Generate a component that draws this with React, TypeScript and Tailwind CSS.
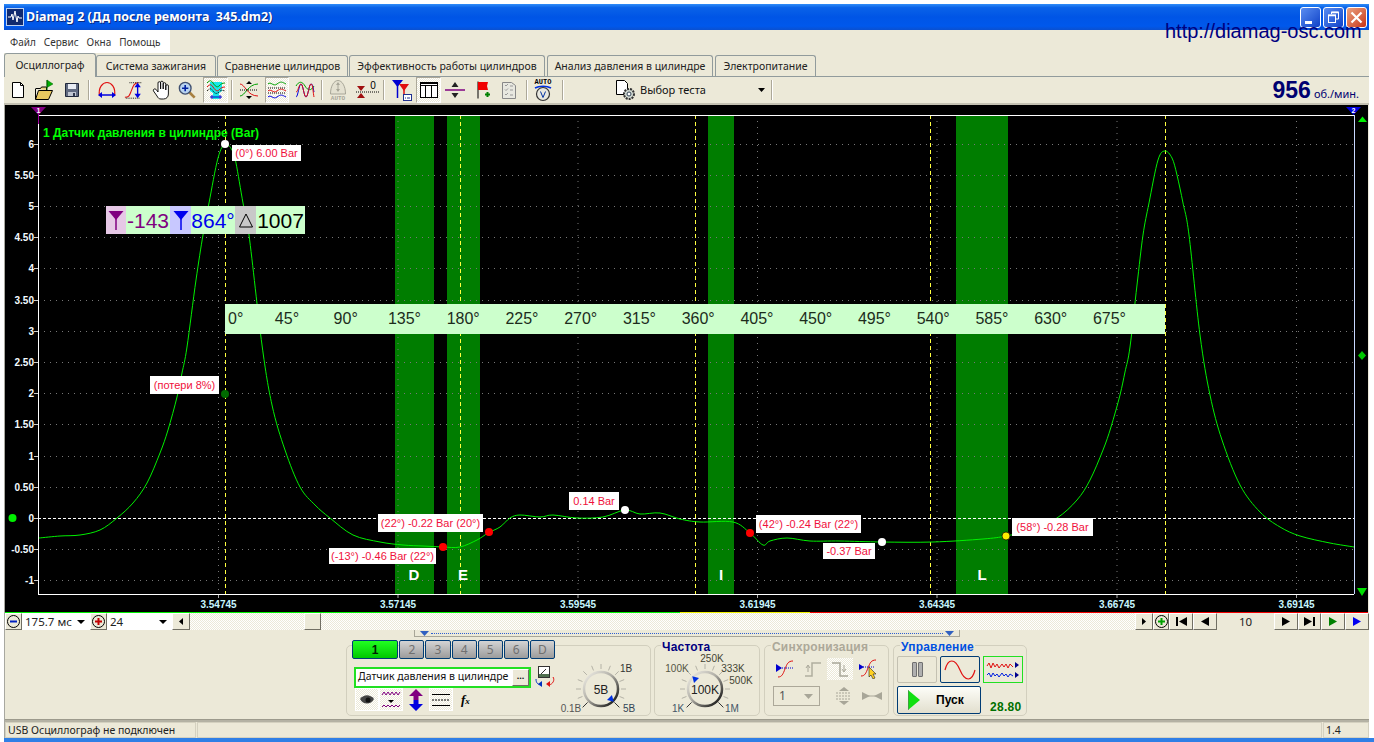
import React from "react";

const smooth = (p: number[][]) => {
  let d = `M${p[0][0]} ${p[0][1]}`;
  for (let i = 0; i < p.length - 1; i++) {
    const a = p[Math.max(i - 1, 0)], b = p[i], c = p[i + 1], e = p[Math.min(i + 2, p.length - 1)];
    d += ` C${(b[0] + (c[0] - a[0]) / 6).toFixed(1)} ${(b[1] + (c[1] - a[1]) / 6).toFixed(1)} ${(c[0] - (e[0] - b[0]) / 6).toFixed(1)} ${(c[1] - (e[1] - b[1]) / 6).toFixed(1)} ${c[0]} ${c[1]}`;
  }
  return d;
};

const curve = [
  [39, 538],[60, 536],[80, 535],[100, 530],[117, 518],[133, 503],[147, 483],[160, 453],[168, 430],[177, 397],[182, 373],[187, 347],
  [196, 280],[203, 235],[209, 203],[218, 158],[225, 144],[232, 150],[236, 163],[243, 203],[249, 235],[262, 345],[272, 405],[285, 450],[300, 487],[315, 505],[330, 518],
  [353, 535],[380, 542],[403, 545],[423, 546],[443, 547],[460, 547],[477, 540],[488, 533],[500, 527],[510, 518],[520, 515],[540, 517],[553, 515],[577, 518],[603, 517],[625, 510],[640, 514],[660, 513],
  [680, 519],[700, 522],[733, 522],[750, 533],[763, 545],[770, 541],[787, 538],[810, 541],[840, 541],[882, 542],[933, 542],[983, 539],[1006, 536],[1030, 530],[1057, 518],[1077, 500],[1090, 480],[1103, 450],[1111, 427],[1120, 395],[1125, 372],[1130, 347],
  [1137, 285],[1143, 235],[1149, 203],[1158, 160],[1165, 151],[1172, 158],[1177, 175],[1183, 203],[1189, 235],[1200, 335],[1210, 395],[1222, 440],[1240, 485],[1260, 512],[1280, 527],[1300, 536],[1330, 543],[1354, 547],
];

const yLabels = ["6", "5.50", "5", "4.50", "4", "3.50", "3", "2.50", "2", "1.50", "1", "0.50", "0", "-0.50", "-1"];
const vGrid = [218.5, 398, 578, 757.5, 937, 1117, 1296.5];
const xLabels = ["3.54745", "3.57145", "3.59545", "3.61945", "3.64345", "3.66745", "3.69145"];
const yellow = [225.5, 460.5, 695.5, 930.5, 1165.5];
const dots: [number, number, string][] = [[225, 144, "#fff"], [443, 547, "#f00"], [489, 532, "#f00"], [625, 510, "#fff"], [750, 533, "#f00"], [882, 542, "#fff"], [1006, 536, "#ffeb00"], [225, 394, "#006a00"]];

function Chart() {
  return (
    <svg className="block h-[507px] w-[1363px]" viewBox="5 105 1363 507" fontFamily="'Liberation Sans', sans-serif">
      <rect x="5" y="105" width="1363" height="507" fill="#000" />
      {[[395, 39], [447, 33], [708, 26], [956, 52]].map(([x, w]) => <rect key={x} x={x} y="115" width={w} height="479" fill="#007d00" />)}
      {yLabels.map((t, i) => {
        const y = 143.5 + i * 31.2;
        const r = Math.round(y) + 0.5;
        return (
          <g key={t}>
            {t !== "0" && <line x1="38" x2="1354" y1={r} y2={r} stroke="#777" strokeDasharray="1 5" />}
            <line x1="34" x2="38" y1={r} y2={r} stroke="#ccc" />
            <text x="34" y={r + 3.5} textAnchor="end" fontSize="10" fontWeight="700" fill="#f4fbff">{t}</text>
          </g>
        );
      })}
      {vGrid.map((x, i) => (
        <g key={x}>
          <line x1={x} x2={x} y1="115" y2="594" stroke="#777" strokeDasharray="1 5" />
          <line x1={x} x2={x} y1="594" y2="598" stroke="#aaa" />
          <text x={x} y="608" textAnchor="middle" fontSize="10" fontWeight="700" fill="#c8f6ff">{xLabels[i]}</text>
        </g>
      ))}
      {yellow.map((x) => <line key={x} x1={x} x2={x} y1="115" y2="594" stroke="#ffff40" strokeDasharray="4 3" />)}
      <line x1="38" x2="1354" y1="518.5" y2="518.5" stroke="#fff" strokeDasharray="3 2" />
      <path d={smooth(curve)} fill="none" stroke="#00f000" strokeWidth="1" />
      <line x1="38" x2="1354" y1="115.5" y2="115.5" stroke="#fff" />
      <line x1="38" x2="1354" y1="594.5" y2="594.5" stroke="#fff" />
      <line x1="38.5" x2="38.5" y1="115" y2="594" stroke="#fff" />
      <line x1="1354.5" x2="1354.5" y1="115" y2="594" stroke="#c8d8ff" />
      <path d="M31 107h15l-7.5 8z" fill="#800080" />
      <line x1="38.5" x2="38.5" y1="113" y2="124" stroke="#a000a0" />
      <text x="38.5" y="113" textAnchor="middle" fontSize="7" fontWeight="700" fill="#fff">1</text>
      <path d="M1346 107h15l-7.5 8z" fill="#0000e0" />
      <text x="1353.5" y="113" textAnchor="middle" fontSize="7" fontWeight="700" fill="#fff">2</text>
      <path d="M1358 122h9l-4.500 -5.500z" fill="#00f000" />
      <path d="M1362 351l4 4.500 -4 4.500 -4 -4.500z" fill="#00c800" />
      <path d="M1357 588h10l-5 8z" fill="#00e000" />
      <circle cx="12.500" cy="518" r="4" fill="#00f000" />
      {dots.map(([x, y, c]) => <circle key={x + "-" + y} cx={x} cy={y} r="4" fill={c} stroke={c === "#ffeb00" ? "#000" : "none"} strokeWidth="0.700" />)}
      {[["D", 414], ["E", 463], ["I", 721], ["L", 982]].map(([t, x]) => (
        <text key={t as string} x={x as number} y="580" textAnchor="middle" fontSize="15" fontWeight="700" fill="#fff">{t}</text>
      ))}
      <text x="43" y="137" fontSize="12" fontWeight="700" fill="#00ff00">1 Датчик давления в цилиндре (Bar)</text>
    </svg>
  );
}

const Label = ({ className, children }: { className: string; children: React.ReactNode }) => (
  <div className={`absolute flex items-center justify-center whitespace-nowrap bg-white text-[11px] leading-none text-[#f0103c] ${className}`}>{children}</div>
);

const Funnel = ({ color }: { color: string }) => (
  <svg width="16" height="22" viewBox="0 0 16 22"><path d="M0.500 2h15L8 11z" fill={color} /><path d="M8 9v12" stroke={color} strokeWidth="1.500" /></svg>
);

const rulerLabels = ["45°", "90°", "135°", "180°", "225°", "270°", "315°", "360°", "405°", "450°", "495°", "540°", "585°", "630°", "675°"];

function Scope() {
  return (
    <div className="relative h-[507px] w-[1363px] overflow-hidden font-['Liberation_Sans',sans-serif]">
      <Chart />
      <Label className="left-[227px] top-[40px] h-[16px] w-[69px]">(0°) 6.00 Bar</Label>
      <Label className="left-[145px] top-[271px] h-[18px] w-[69px]">(потери 8%)</Label>
      <Label className="left-[373px] top-[409px] h-[18px] w-[105px]">(22°) -0.22 Bar (20°)</Label>
      <Label className="left-[324px] top-[443px] h-[16px] w-[107px]">(-13°) -0.46 Bar (22°)</Label>
      <Label className="left-[564px] top-[387px] h-[18px] w-[50px]">0.14 Bar</Label>
      <Label className="left-[751px] top-[410px] h-[18px] w-[105px]">(42°) -0.24 Bar (22°)</Label>
      <Label className="left-[818px] top-[438px] h-[16px] w-[52px]">-0.37 Bar</Label>
      <Label className="left-[1007px] top-[413px] h-[18px] w-[81px]">(58°) -0.28 Bar</Label>

      <div className="absolute left-[101px] top-[101px] flex h-[28px] items-center text-[21px] leading-none">
        <div className="flex h-full w-[20px] items-center justify-center bg-[#e6c8e6]"><Funnel color="#800080" /></div>
        <div className="flex h-full w-[44px] items-center justify-center bg-[#ccffcc] text-[#800080]">-143</div>
        <div className="flex h-full w-[21px] items-center justify-center bg-[#c8c8ff]"><Funnel color="#0000ee" /></div>
        <div className="flex h-full w-[44px] items-center justify-center bg-[#ccffcc] text-[#0000ee]">864°</div>
        <div className="flex h-full w-[21px] items-center justify-center bg-[#c8c8c8]">
          <svg width="16" height="16" viewBox="0 0 16 16"><path d="M8 2L1.500 15h13z" fill="none" stroke="#000" /></svg>
        </div>
        <div className="flex h-full w-[49px] items-center justify-center bg-[#ccffcc] text-black">1007</div>
      </div>

      <div className="absolute left-[220px] top-[199px] flex h-[30px] w-[940px] items-center bg-[#ccffcc] text-[16px] leading-none text-[#1c2c1c]">
        <div className="w-[32.600px] shrink-0 pl-[3px]">0°</div>
        {rulerLabels.map((t) => <div key={t} className="w-[58.750px] shrink-0 text-center">{t}</div>)}
      </div>
    </div>
  );
}

/* ---------- toolbar icons ---------- */
const I = ({ w = 22, h = 22, children }: { w?: number; h?: number; children: React.ReactNode }) => (
  <svg width={w} height={h} viewBox={`0 0 ${w} ${h}`} fill="none">{children}</svg>
);
const IconNew = () => <I w={14} h={18}><path d="M1.500 1.500h8l3 3v12h-11z" fill="#fff" stroke="#000" /><path d="M9.500 1.500v3h3" stroke="#000" /></I>;
const IconOpen = () => (
  <I w={20} h={22}>
    <path d="M1.500 9.500h5l1 -1.500h5v3" fill="#e8d080" stroke="#000" />
    <path d="M1.500 20.500l3 -9h14l-4 9z" fill="#e8c860" stroke="#000" />
    <path d="M1.500 10v10" stroke="#000" />
    <path d="M13 1l6 4 -6 3.500z" fill="#00b000" stroke="#006000" strokeWidth=".5" /><path d="M13 1v10" stroke="#006000" />
  </I>
);
const IconSave = () => (
  <I w={16} h={16}>
    <path d="M1.500 1.500h13v13h-13z" fill="#606a80" stroke="#20283c" />
    <rect x="4" y="2" width="8" height="5" fill="#e8ecf4" />
    <rect x="4" y="10" width="8" height="4" fill="#c0c6d2" />
    <rect x="9" y="11" width="2" height="3" fill="#30384c" />
  </I>
);
const IconArch = () => (
  <I w={20} h={20}>
    <path d="M2.500 16C1 7 6 2.500 10 2.500S19 7 17.500 16" stroke="#e01010" strokeWidth="1.200" />
    <path d="M4 15h12" stroke="#0000e0" strokeWidth="1.500" />
    <path d="M1 15l4 -3v6zM19 15l-4 -3v6z" fill="#0000e0" />
  </I>
);
const IconRise = () => (
  <I w={22} h={22}>
    <path d="M1 19c5 0 5 -2 7 -7s3 -9 8 -9" stroke="#e01010" strokeWidth="1.200" />
    <path d="M6 3h13M2 20h16" stroke="#000" strokeDasharray="1 1" />
    <path d="M15 6v11" stroke="#0000e0" strokeWidth="1.500" />
    <path d="M15 3l-3.500 5h7zM15 20l-3.500 -5h7z" fill="#0000e0" />
  </I>
);
const IconHand = () => (
  <I w={18} h={20}>
    <path d="M6 12V3a1.300 1.300 0 0 1 2.600 0v6V2.500a1.300 1.300 0 0 1 2.600 0V9V4a1.300 1.300 0 0 1 2.600 0v6V6a1.300 1.300 0 0 1 2.600 0v8c0 3 -2 5 -5 5H9c-2 0 -3 -1 -4 -3L1.500 11c-1 -2 2 -3 3 -1z" fill="#fff" stroke="#000" strokeWidth=".9" />
  </I>
);
const IconZoom = () => (
  <I w={20} h={20}>
    <path d="M12 12l6.500 6.500" stroke="#a88040" strokeWidth="3" />
    <circle cx="8" cy="8" r="6.500" fill="#b8d4f0" stroke="#405070" strokeWidth="1.500" />
    <path d="M8 4.500v7M4.500 8h7" stroke="#0020a0" strokeWidth="1.800" />
  </I>
);
const IconCyan = () => (
  <I w={20} h={22}>
    <path d="M4 3h12v9l-3 2v6H7v-6l-3 -2z" fill="#19e6e6" />
    <path d="M1 4c3 -3 4 -3 6 0s4 5 6 3 3 -3 6 -3" stroke="#00a000" />
    <path d="M1 8c3 -3 4 -3 6 0s4 5 6 3 3 -3 6 -3" stroke="#e01010" />
    <path d="M1 12c3 -3 4 -3 6 0s4 3 6 1 3 -2 6 -1" stroke="#000" strokeDasharray="1 1" />
    <path d="M4 18h12M6 16v4M14 16v4" stroke="#0000d0" />
  </I>
);
const IconCross = () => (
  <I w={20} h={20}>
    <path d="M1 4c5 0 7 12 18 12" stroke="#e01010" /><path d="M1 16C6 16 9 4 19 4" stroke="#00a000" />
    <path d="M1 10h18" stroke="#000" strokeDasharray="1 1" />
    <path d="M10 1l-3 3h6zM10 19l-3 -3h6z" fill="#000" />
  </I>
);
const IconWaves = () => (
  <I w={20} h={20}>
    <path d="M1 4c3 -3 5 3 9 0s5 -2 9 0" stroke="#00a000" />
    <path d="M1 8h18M1 13h18" stroke="#000" strokeDasharray="1 1" />
    <path d="M1 11c3 -3 5 3 9 0s5 -2 9 0" stroke="#e01010" />
    <path d="M1 17c3 -3 5 3 9 0s5 -2 9 0" stroke="#0000e0" />
  </I>
);
const IconOverlap = () => (
  <I w={20} h={20}>
    <path d="M1 6c3 -5 6 -5 9 0s6 5 9 0" stroke="#00a000" />
    <path d="M1 17c2 0 3 -13 5 -13s3 13 5 13 3 -13 5 -13 2 4 3 8" stroke="#0000e0" />
    <path d="M1 12c2 0 3 -8 5 -8s3 13 5 13 3 -13 5 -13 2 9 3 13" stroke="#e01010" />
  </I>
);
const IconAutoArch = () => (
  <I w={18} h={22}>
    <path d="M1.500 15C1.500 7 5 1.500 9 1.500s7.500 5.500 7.500 13.500z" fill="#e4e1d1" stroke="#a8a698" />
    <path d="M9 4v8" stroke="#a8a698" /><path d="M9 3l-2 3h4zM9 13l-2 -3h4z" fill="#a8a698" />
    <text x="9" y="21" textAnchor="middle" fontSize="6" fontWeight="700" fill="#a8a698" fontFamily="'Liberation Mono', monospace">AUTO</text>
  </I>
);
const IconZero = () => (
  <I w={26} h={20}>
    <path d="M1 12h24" stroke="#000" strokeDasharray="1 1" />
    <path d="M2 6h8l-4 5z" fill="#a01010" />
    <path d="M6 13l-4 5h8z" fill="#a01010" />
    <text x="18" y="9" textAnchor="middle" fontSize="10" fill="#000" fontFamily="'Liberation Sans', sans-serif">0</text>
  </I>
);
const IconFunnels = () => (
  <I w={20} h={22}>
    <path d="M0 1h11L5.500 8z" fill="#0000d0" /><path d="M5.500 6v13" stroke="#0000d0" strokeWidth="1.500" />
    <path d="M7 5h10l-5 7z" fill="#e01010" /><path d="M12 10v6" stroke="#e01010" strokeWidth="1.500" />
    <rect x="11.500" y="15.500" width="8" height="6" fill="#fff" stroke="#203090" />
    <path d="M13 19h1M15 19h3" stroke="#203090" />
  </I>
);
const IconGrid = () => (
  <I w={18} h={16}>
    <rect x=".5" y=".5" width="17" height="15" fill="#fff" stroke="#000" />
    <path d="M0 1.500h18M0 3.500h18M5.500 3v13M11.500 3v13" stroke="#000" />
  </I>
);
const IconDivider = () => (
  <I w={20} h={18}>
    <path d="M0 9h20" stroke="#800080" strokeWidth="1.500" />
    <path d="M10 1l-3.500 5h7zM10 17l-3.500 -5h7z" fill="#222" />
  </I>
);
const IconFlag = () => (
  <I w={14} h={20}>
    <path d="M2 1.500v17" stroke="#000" />
    <path d="M2 2h10l-1 4 1 4H2z" fill="#f00000" />
    <path d="M9 14.500h5M11.500 12v5" stroke="#008000" strokeWidth="2" />
  </I>
);
const IconChecklist = () => (
  <I w={14} h={18}>
    <path d="M.5 1.500h9l4 3v13H.5z" fill="#e8e8e0" stroke="#888" />
    <path d="M3 4l1 1 2 -2M3 8.500l1 1 2 -2M3 13l1 1 2 -2M8 5h3M8 9h3M8 14h3" stroke="#999" />
  </I>
);
const IconAutoV = () => (
  <I w={18} h={24}>
    <text x="9" y="6" textAnchor="middle" fontSize="7" fontWeight="700" fill="#000" fontFamily="'Liberation Mono', monospace">AUTO</text>
    <path d="M1 10c4 -2.500 12 -2.500 16 0" stroke="#0030e0" strokeWidth="1.500" />
    <circle cx="9" cy="16" r="6.500" fill="#e8e8e0" stroke="#333" strokeWidth="1.200" />
    <path d="M6.500 13.500l2.500 6 2.500 -6" stroke="#0030a0" />
  </I>
);
const IconTest = () => (
  <I w={22} h={22}>
    <path d="M1.500 1.500h8l3 3v11h-11z" fill="#fff" stroke="#000" />
    <circle cx="14" cy="15" r="5" fill="#d0d8d0" stroke="#333" strokeWidth="2" strokeDasharray="2 1" />
    <circle cx="14" cy="15" r="2" fill="#fff" stroke="#345" />
  </I>
);

const Slot = ({ className, children }: { className: string; children: React.ReactNode }) => (
  <div className={`flex h-[26px] shrink-0 items-center justify-center ${className}`}>{children}</div>
);
const Pressed = ({ className, children }: { className: string; children: React.ReactNode }) => (
  <div className={`flex h-[26px] shrink-0 items-center justify-center border border-t-[#aca899] border-l-[#aca899] border-r-white border-b-white bg-[repeating-conic-gradient(#fff_0_25%,#ece9d8_0_50%)] bg-size-[2px_2px] ${className}`}>{children}</div>
);
const Sep = ({ className = "" }: { className?: string }) => <div className={`my-[3px] h-[20px] w-[2px] shrink-0 border-l border-[#aca899] border-r-white bg-white ${className}`} />;

function Toolbar() {
  return (
    <div className="flex h-[28px] items-start border-b-2 border-[#c4c1b2]">
      <Slot className="w-[28px]"><IconNew /></Slot>
      <Slot className="w-[24px]"><IconOpen /></Slot>
      <Slot className="w-[32px]"><IconSave /></Slot>
      <Sep />
      <Slot className="w-[34px]"><IconArch /></Slot>
      <Slot className="w-[20px]"><IconRise /></Slot>
      <Slot className="w-[34px]"><IconHand /></Slot>
      <Slot className="w-[18px]"><IconZoom /></Slot>
      <Pressed className="ml-[7px] w-[25px]"><IconCyan /></Pressed>
      <Sep className="ml-[3px]" />
      <Slot className="w-[32px]"><IconCross /></Slot>
      <Pressed className="w-[24px]"><IconWaves /></Pressed>
      <Slot className="w-[32px]"><IconOverlap /></Slot>
      <Sep />
      <Slot className="w-[30px]"><IconAutoArch /></Slot>
      <Slot className="w-[30px]"><IconZero /></Slot>
      <Sep />
      <Slot className="ml-[3px] w-[28px]"><IconFunnels /></Slot>
      <Pressed className="w-[25px]"><IconGrid /></Pressed>
      <Slot className="w-[28px]"><IconDivider /></Slot>
      <Slot className="w-[28px]"><IconFlag /></Slot>
      <Slot className="w-[24px]"><IconChecklist /></Slot>
      <Sep className="ml-[5px]" />
      <Slot className="w-[30px]"><IconAutoV /></Slot>
      <Sep className="ml-[4px]" />
      <div className="flex h-[26px] w-[207px] shrink-0 items-center pl-[51px] text-[11px] text-[#111]">
        <IconTest />
        <span className="ml-[3px]">Выбор теста</span>
        <svg className="ml-[52px]" width="7" height="4" viewBox="0 0 7 4"><path d="M0 0h7L3.500 4z" fill="#000" /></svg>
      </div>
      <Sep />
      <div className="ml-auto flex h-[26px] items-center pr-[10px] text-[#000070]">
        <span className="font-['Liberation_Sans',sans-serif] text-[23px] font-bold leading-none">956</span>
        <span className="ml-[3px] mt-[6px] text-[11px] leading-none">об./мин.</span>
      </div>
    </div>
  );
}

/* ---------- scroll row ---------- */
const RoundBtn = ({ color, sign }: { color: string; sign: "-" | "+" }) => (
  <svg width="13" height="13" viewBox="0 0 13 13" fill="none">
    <circle cx="6.500" cy="6.500" r="6" stroke="#000" fill="#ece9d8" />
    <path d={sign === "-" ? "M3 6.500h7" : "M3 6.500h7M6.500 3v7"} stroke={color} strokeWidth="2" />
  </svg>
);
const Raised = ({ className, children }: { className: string; children?: React.ReactNode }) => (
  <div className={`flex h-[17px] shrink-0 items-center justify-center border border-t-white border-l-white border-r-[#716f64] border-b-[#716f64] bg-[#ece9d8] ${className}`}>{children}</div>
);
const Tri = ({ dir, color = "#000" }: { dir: "l" | "r"; color?: string }) => (
  <svg width="8" height="9" viewBox="0 0 8 9"><path d={dir === "l" ? "M8 0v9L0 4.500z" : "M0 0v9l8 -4.500z"} fill={color} /></svg>
);

function ScrollRow() {
  return (
    <div className="h-[18px]">
      <div className="flex h-[1px] w-[1363px]">
        <div className="w-[675px] bg-[#00f000]" />
        <div className="w-[130px] bg-[#f0f000]" />
        <div className="flex-1 bg-[#f00000]" />
      </div>
      <div className="flex h-[17px] items-stretch text-[11.500px] leading-none text-[#222]">
        <Raised className="w-[17px]"><RoundBtn color="#0020c0" sign="-" /></Raised>
        <div className="flex w-[68px] shrink-0 items-center bg-white pl-[3px]">175.7 мс<svg className="ml-auto mr-[5px]" width="8" height="4" viewBox="0 0 8 4"><path d="M0 0h8L4 4z" fill="#000" /></svg></div>
        <Raised className="w-[17px]"><RoundBtn color="#c00000" sign="+" /></Raised>
        <div className="flex w-[65px] shrink-0 items-center bg-white pl-[3px]">24<svg className="ml-auto mr-[5px]" width="8" height="4" viewBox="0 0 8 4"><path d="M0 0h8L4 4z" fill="#000" /></svg></div>
        <Raised className="w-[18px]"><svg width="4" height="7" viewBox="0 0 4 7"><path d="M4 0v7L0 3.500z" fill="#000" /></svg></Raised>
        <div className="flex flex-1 items-start bg-[repeating-conic-gradient(#ece9d8_0_25%,#fff_0_50%)] bg-size-[2px_2px] pl-[114px]">
          <Raised className="w-[17px]" />
        </div>
        <Raised className="w-[18px]"><svg width="4" height="7" viewBox="0 0 4 7"><path d="M0 0v7l4 -3.500z" fill="#000" /></svg></Raised>
        <Raised className="w-[16px]"><RoundBtn color="#00a000" sign="+" /></Raised>
        <Raised className="w-[24px]"><div className="mr-[1px] h-[9px] w-[2px] bg-black" /><Tri dir="l" /></Raised>
        <Raised className="w-[24px]"><Tri dir="l" /></Raised>
        <div className="flex w-[57px] shrink-0 items-center justify-center">10</div>
        <Raised className="w-[24px]"><Tri dir="r" /></Raised>
        <Raised className="w-[23px]"><Tri dir="r" /><div className="ml-[1px] h-[9px] w-[2px] bg-black" /></Raised>
        <Raised className="w-[24px]"><Tri dir="r" color="#008000" /></Raised>
        <Raised className="w-[24px] border-l-[#0060e0]"><Tri dir="r" color="#0000f0" /></Raised>
      </div>
    </div>
  );
}

/* ---------- knobs ---------- */
const Knob = ({ w, cx, cy, value, id, ptr, ticks, labels }: { w: number; cx: number; cy: number; value: string; id: string; ptr: number; ticks: number[]; labels: [string, number, number, string][] }) => (
  <svg width={w} height="68" viewBox={`0 0 ${w} 68`} fontFamily="'Liberation Sans', sans-serif">
    <defs>
      <linearGradient id={id} x1="0" y1="0" x2="1" y2="1">
        <stop offset="0" stopColor="#f4f2ea" /><stop offset=".45" stopColor="#b0aea6" /><stop offset="1" stopColor="#000" />
      </linearGradient>
    </defs>
    {ticks.map((a) => {
      const r = (a * Math.PI) / 180;
      return <line key={a} x1={cx + Math.cos(r) * 20} y1={cy + Math.sin(r) * 20} x2={cx + Math.cos(r) * 25} y2={cy + Math.sin(r) * 25} stroke="#b4b2a6" />;
    })}
    {[135, 45].map((a) => {
      const r = (a * Math.PI) / 180;
      return <line key={a} x1={cx + Math.cos(r) * 19} y1={cy + Math.sin(r) * 19} x2={cx + Math.cos(r) * 26} y2={cy + Math.sin(r) * 26} stroke="#333" />;
    })}
    <circle cx={cx} cy={cy} r="17" fill="#ece9d8" stroke={`url(#${id})`} strokeWidth="2.500" />
    <path d="M0 -3.500L6 0 0 3.500z" fill="#0030e0" transform={`translate(${cx + Math.cos((ptr * Math.PI) / 180) * 12} ${cy + Math.sin((ptr * Math.PI) / 180) * 12}) rotate(${ptr})`} />
    <text x={cx} y={cy + 4.500} textAnchor="middle" fontSize="12" fill="#222">{value}</text>
    {labels.map(([t, x, y, c]) => <text key={t} x={x} y={y} textAnchor="middle" fontSize="10" fill={c}>{t}</text>)}
  </svg>
);

const Panel = ({ className, title, titleClass, children }: { className: string; title?: string; titleClass?: string; children: React.ReactNode }) => (
  <div className={`relative h-[71px] shrink-0 rounded-[5px] border border-[#d2cfbe] ${className}`}>
    {title && <div className={`absolute -top-[6px] left-[6px] bg-[#ece9d8] px-[1px] font-['Liberation_Sans',sans-serif] text-[12px] font-bold leading-[14px] tracking-[0.2px] ${titleClass}`}>{title}</div>}
    {children}
  </div>
);

const Chan = ({ t, active }: { t: string; active?: boolean }) => (
  <div className={active
    ? "flex h-[19px] w-[48px] items-center justify-center rounded-[2px] border border-[#003c74] bg-linear-to-b from-[#20ff20] to-[#00c800] font-['Liberation_Sans',sans-serif] text-[12px] font-bold text-[#002000]"
    : "flex h-[19px] w-[26px] items-center justify-center rounded-[2px] border border-[#003c74] bg-linear-to-b from-[#d4d4d4] to-[#9c9c9c] text-[12px] text-[#707070]"}>{t}</div>
);

const SmallIconBox = ({ className, pressed, children }: { className: string; pressed?: boolean; children: React.ReactNode }) => (
  <div className={`flex h-[23px] shrink-0 items-center justify-center ${pressed ? "border border-white bg-[repeating-conic-gradient(#fff_0_25%,#ece9d8_0_50%)] bg-size-[2px_2px]" : ""} ${className}`}>{children}</div>
);

function Panel1() {
  return (
    <Panel className="ml-[2px] w-[305px]">
      <div className="flex">
        <div className="-mt-[6px] flex w-[208px] shrink-0 flex-col pl-[5px]">
          <div className="flex gap-[1px]">
            <Chan t="1" active />
            <Chan t="2" /><Chan t="3" /><Chan t="4" /><Chan t="5" /><Chan t="6" /><Chan t="D" />
          </div>
          <div className="ml-[2px] mt-[7px] flex items-center">
            <div className="flex h-[21px] w-[177px] shrink-0 items-center border-2 border-[#22e022] bg-white pl-[2px] text-[10.500px] text-[#111]">
              <span className="whitespace-nowrap">Датчик давления в цилиндре</span>
              <div className="ml-auto mr-[0px] flex h-[17px] w-[17px] shrink-0 items-center justify-center border border-t-white border-l-white border-r-[#716f64] border-b-[#716f64] bg-[#ece9d8] text-[9px] font-bold leading-none">···</div>
            </div>
            <svg className="ml-[4px]" width="20" height="22" viewBox="0 0 20 22" fill="none">
              <rect x="3.500" y=".5" width="11" height="11" fill="#fff" stroke="#333" />
              <rect x="4" y="8" width="10" height="3" fill="#507050" />
              <path d="M6 8l5 -5" stroke="#333" />
              <path d="M1 13c0 4 2 6 6 6" stroke="#0030c0" /><path d="M7 15v6l-4 -3z" fill="#0030c0" />
              <path d="M18 11c2 3 0 7 -4 8" stroke="#e01010" /><path d="M13 15v6l4 -3z" fill="#e01010" transform="rotate(180 14 18)" />
            </svg>
          </div>
          <div className="ml-[3px] flex items-center">
            <SmallIconBox pressed className="w-[24px]">
              <svg width="16" height="12" viewBox="0 0 16 12"><path d="M1 5c4 -5 10 -5 14 0 -3 6 -11 6 -14 0z" fill="#444" /><circle cx="9" cy="6" r="2.500" fill="#111" /></svg>
            </SmallIconBox>
            <SmallIconBox pressed className="w-[24px]">
              <svg width="20" height="20" viewBox="0 0 20 20" fill="none"><path d="M1 5l2 -3 2 3 2 -3 2 3 2 -3 2 3 2 -3 2 3 2 -3" stroke="#800080" /><path d="M1 17l2 -2 2 2 2 -2 2 2 2 -2 2 2 2 -2 2 2 2 -2" stroke="#800080" /><path d="M7 10h6l-3 3z" fill="#000" /></svg>
            </SmallIconBox>
            <div className="flex w-[26px] shrink-0 justify-center">
              <svg width="14" height="22" viewBox="0 0 14 22"><path d="M7 0l7 7H9.500v4h-5V7H0z" fill="#800080" /><path d="M7 22l7 -7H9.500v-4h-5v4H0z" fill="#0000e0" /></svg>
            </div>
            <SmallIconBox pressed className="w-[24px]">
              <svg width="18" height="16" viewBox="0 0 18 16"><path d="M0 2.500h18M0 13.500h18" stroke="#000" /><path d="M0 8h18" stroke="#000" strokeDasharray="2 1" /></svg>
            </SmallIconBox>
            <div className="ml-[8px] font-['Liberation_Serif',serif] text-[13px] font-bold italic leading-none">f<span className="text-[9px]">x</span></div>
          </div>
        </div>
        <div className="-mt-[1px] ml-[0px]">
          <Knob w={92} cx={46} cy={44} id="k1" value="5В" ptr={45} ticks={[180, 158, 202, 225, 248, 270, 292, 315, 338, 0, 22]}
            labels={[["1В", 71, 27, "#333"], ["0.1В", 16, 67, "#555"], ["5В", 74, 67, "#345"]]} />
        </div>
      </div>
    </Panel>
  );
}

function Panel2() {
  return (
    <Panel className="ml-[3px] w-[106px]" title="Частота" titleClass="text-[#000080]">
      <div className="-mt-[1px]">
        <Knob w={104} cx={50} cy={44} id="k2" value="100K" ptr={225} ticks={[180, 158, 202, 248, 270, 292, 315, 338, 0, 22, 225]}
          labels={[["100K", 22, 27, "#554"], ["250K", 57, 17, "#443"], ["333K", 78, 27, "#443"], ["500K", 86, 39, "#443"], ["1K", 23, 67, "#456"], ["1M", 77, 67, "#456"]]} />
      </div>
    </Panel>
  );
}

function Panel3() {
  return (
    <Panel className="ml-[4px] w-[125px]" title="Синхронизация" titleClass="text-[#aca899]">
      <div className="mt-[12px] flex h-[22px] items-center pl-[6px]">
        <div className="flex w-[28px] justify-center">
          <svg width="20" height="20" viewBox="0 0 20 20" fill="none"><path d="M3 18c4 0 5 -3 7 -8s3 -8 8 -8" stroke="#e01010" /><path d="M1 9h17" stroke="#0000d0" strokeDasharray="1 1" /><path d="M1 5l6 4 -6 4z" fill="#0000d0" /></svg>
        </div>
        <div className="flex w-[28px] justify-center">
          <svg width="18" height="16" viewBox="0 0 18 16" fill="none"><path d="M1 15h7V2h9" stroke="#b0ae9e" strokeWidth="1.500" /><path d="M4 11V5M2 7l2 -3 2 3" stroke="#a8a698" /></svg>
        </div>
        <div className="flex h-[22px] w-[26px] items-center justify-center bg-[repeating-conic-gradient(#fff_0_25%,#ece9d8_0_50%)] bg-size-[2px_2px]">
          <svg width="18" height="16" viewBox="0 0 18 16" fill="none"><path d="M1 2h8v13h8" stroke="#a8a698" strokeWidth="1.500" /><path d="M13 4v6M11 8l2 3 2 -3" stroke="#a8a698" /></svg>
        </div>
        <div className="ml-[3px] flex w-[26px] justify-center">
          <svg width="22" height="20" viewBox="0 0 22 20" fill="none"><path d="M3 17c4 0 5 -3 7 -8s3 -8 8 -8" stroke="#e01010" /><path d="M1 8h16" stroke="#0000d0" strokeDasharray="1 1" /><path d="M1 5l5 3 -5 3z" fill="#0000d0" /><path d="M11 8l7 7h-3l2 4 -2 1 -2 -4 -2 2z" fill="#ffd020" stroke="#222" strokeWidth=".6" /></svg>
        </div>
      </div>
      <div className="mt-[6px] flex items-center pl-[8px]">
        <div className="flex h-[20px] w-[47px] items-center border border-[#aca899] pl-[5px] text-[12px] text-[#555]">1
          <svg className="ml-auto mr-[6px]" width="9" height="5" viewBox="0 0 9 5"><path d="M0 0h9L4.500 5z" fill="#a8a698" /></svg>
        </div>
        <div className="ml-[12px] flex w-[24px] justify-center">
          <svg width="20" height="18" viewBox="0 0 20 18" fill="none"><path d="M2 9h14M2 6h14M2 12h14" stroke="#a8a698" strokeDasharray="2 1" /><path d="M10 0l5 4H5zM10 18l5 -4H5z" fill="#a8a698" /></svg>
        </div>
        <div className="ml-[4px] flex w-[24px] justify-center">
          <svg width="20" height="10" viewBox="0 0 20 10"><path d="M0 1l8 4 -8 4zM20 1l-8 4 8 4z" fill="#a8a698" /><path d="M0 5h20" stroke="#a8a698" /></svg>
        </div>
      </div>
    </Panel>
  );
}

function Panel4() {
  return (
    <Panel className="ml-[4px] w-[134px]" title="Управление" titleClass="text-[#0050e0]">
      <div className="ml-[3px] mt-[10px] flex gap-[3px]">
        <div className="flex h-[27px] w-[40px] items-center justify-center gap-[1px] rounded-[2px] border border-[#c4c1b2]">
          <div className="h-[15px] w-[5px] rounded-[1px] border border-[#707070] bg-[#b0b0b0]" />
          <div className="h-[15px] w-[5px] rounded-[1px] border border-[#707070] bg-[#b0b0b0]" />
        </div>
        <div className="flex h-[27px] w-[40px] items-center justify-center rounded-[2px] border border-[#003c74]">
          <svg width="32" height="20" viewBox="0 0 32 20" fill="none"><path d="M1 10C4 -2 11 -2 16 10s12 12 15 0" stroke="#e01010" strokeWidth="1.200" /></svg>
        </div>
        <div className="flex h-[27px] w-[40px] items-center justify-center border-[1.500px] border-[#22e022]">
          <svg width="34" height="20" viewBox="0 0 34 20" fill="none">
            <path d="M1 6l2 -3 2 5 2 -5 2 4 2 -3 2 4 3 -4 2 3 2 -3 2 4 2 -4 3 3" stroke="#e01010" /><path d="M29 2v6l4 -3z" fill="#00008b" />
            <path d="M1 15l2 -2 2 4 2 -4 2 3 2 -2 2 3 3 -4 2 3 2 -2 2 3 2 -3 3 2" stroke="#0020e0" /><path d="M29 12v6l4 -3z" fill="#00008b" />
          </svg>
        </div>
      </div>
      <div className="ml-[3px] mt-[3px] flex items-center">
        <div className="flex h-[28px] w-[84px] shrink-0 items-center rounded-[2px] border border-[#003c74] bg-linear-to-b from-[#fdfdf8] to-[#e2dfce] pl-[10px]">
          <svg width="12" height="20" viewBox="0 0 12 20"><path d="M0 0l12 10L0 20z" fill="#10e010" /><path d="M0 0v20" stroke="#666" /></svg>
          <span className="ml-[16px] font-['Liberation_Sans',sans-serif] text-[12px] font-bold leading-none text-black">Пуск</span>
        </div>
        <div className="ml-[9px] mt-[14px] font-['Liberation_Sans',sans-serif] text-[12px] font-bold leading-none tracking-[0.3px] text-[#007000]">28.80</div>
      </div>
    </Panel>
  );
}

const tabs: [string, string][] = [
  ["Система зажигания", "w-[120px]"],
  ["Сравнение цилиндров", "ml-[1px] w-[131px]"],
  ["Эффективность работы цилиндров", "ml-[1px] w-[196px]"],
  ["Анализ давления в цилиндре", "ml-[2px] w-[166px]"],
  ["Электропитание", "ml-[2px] w-[101px]"],
];

export default function App() {
  return (
    <div className="h-[742px] w-[1374px] overflow-hidden bg-white pl-[4px] pr-[5px] pt-[4px] font-['Noto_Sans',sans-serif]">
      <div className="relative h-[734px] w-[1365px] bg-[#ece9d8]">
        {/* title bar */}
        <div className="flex h-[26px] items-center bg-[linear-gradient(180deg,#2f8cf8_0%,#0a62e8_14%,#0055e6_50%,#0058ec_85%,#0a50d0_100%)]">
          <svg width="18" height="18" viewBox="0 0 18 18" fill="none" className="ml-[2px]">
            <rect x=".5" y=".5" width="17" height="17" fill="#102a70" stroke="#bcd0f0" />
            <path d="M2 9h3l1 -3 1 6 2 -9 2 11 1 -6 1 2h3" stroke="#fff" />
          </svg>
          <span className="ml-[2px] whitespace-pre text-[12.500px] font-bold leading-none text-white [text-shadow:1px_1px_0_#0a2a80]">Diamag 2 (Дд после ремонта  345.dm2)</span>
          <div className="ml-auto mr-[2px] flex items-center gap-[2px]">
            <div className="flex h-[21px] w-[21px] items-end justify-start rounded-[3px] border border-white bg-linear-to-br from-[#5a8cf0] to-[#1040c8] pb-[3px] pl-[4px]"><div className="h-[3px] w-[7px] bg-white" /></div>
            <div className="flex h-[21px] w-[21px] items-center justify-center rounded-[3px] border border-white bg-linear-to-br from-[#5a8cf0] to-[#1040c8]">
              <svg width="13" height="13" viewBox="0 0 13 13" fill="none"><path d="M4.500 3V1h7v7H9" stroke="#fff" /><rect x="1.500" y="4" width="7" height="7.500" stroke="#fff" /><path d="M1 4.500h8M4 1.500h8" stroke="#fff" strokeWidth="1.500" /></svg>
            </div>
            <div className="flex h-[21px] w-[21px] items-center justify-center rounded-[3px] border border-white bg-linear-to-br from-[#e8a080] to-[#c83010]">
              <svg width="13" height="13" viewBox="0 0 13 13"><path d="M1.500 1.500l10 10M11.500 1.500l-10 10" stroke="#fff" strokeWidth="2.200" /></svg>
            </div>
          </div>
        </div>

        <div className="absolute left-[1161px] top-[16px] whitespace-nowrap font-['Liberation_Sans',sans-serif] text-[20px] leading-[22px] text-[#000080]">http://diamag-osc.com</div>

        {/* menu */}
        <div className="h-[23px]">
          <div className="flex h-[23px] w-[166px] items-center gap-[8px] bg-white pl-[6px] text-[10px] leading-none text-[#333]">
            <span>Файл</span><span>Сервис</span><span>Окна</span><span>Помощь</span>
          </div>
        </div>

        {/* tabs */}
        <div className="flex h-[24px] items-end border-b border-[#919b9c] text-[10.500px] leading-none text-[#222]">
          <div className="relative z-10 -mb-[1px] flex h-[24px] w-[92px] shrink-0 items-center justify-center rounded-t-[3px] border border-b-0 border-[#919b9c] bg-[#ece9d8]">Осциллограф</div>
          {tabs.map(([t, w]) => (
            <div key={t} className={`flex h-[21px] shrink-0 items-center justify-center rounded-t-[3px] border border-b-0 border-[#919b9c] bg-[#ece9d8] ${w}`}>{t}</div>
          ))}
        </div>

        <Toolbar />

        {/* scope */}
        <div className="border-l border-[#a8a8a0]">
          <Scope />
          <ScrollRow />
          <div className="h-[89px]">
            <div className="relative ml-[409px] flex h-[7px] w-[546px] items-center justify-between border border-t-0 border-[#a8a698] px-[5px]">
              <svg width="9" height="5" viewBox="0 0 9 5"><path d="M0 0h9L4.500 5z" fill="#3060c0" /></svg>
              <div className="mx-[2px] flex-1 border-t border-dotted border-[#3060d0]" />
              <svg width="9" height="5" viewBox="0 0 9 5"><path d="M0 0h9L4.500 5z" fill="#3060c0" /></svg>
            </div>
            <div className="ml-[339px] mt-[8px] flex">
              <Panel1 />
              <Panel2 />
              <Panel3 />
              <Panel4 />
            </div>
          </div>
          <div className="h-[3px] border-t border-[#9c9a8c] border-b-white bg-[#b4b2a4]" />
          <div className="flex h-[16px] text-[10.500px] leading-none text-[#222]">
            <div className="flex w-[191px] shrink-0 items-center border border-[#d4d1c0] pl-[2px]">USB Осциллограф не подключен</div>
            <div className="ml-[1px] w-[1125px] shrink-0 border border-[#d4d1c0]" />
            <div className="ml-[1px] flex flex-1 items-center border border-[#d4d1c0] pl-[2px]">1.4</div>
          </div>
        </div>
      </div>
      <div className="h-[4px] w-[1370px] bg-[#2f7fe6]" />
    </div>
  );
}
